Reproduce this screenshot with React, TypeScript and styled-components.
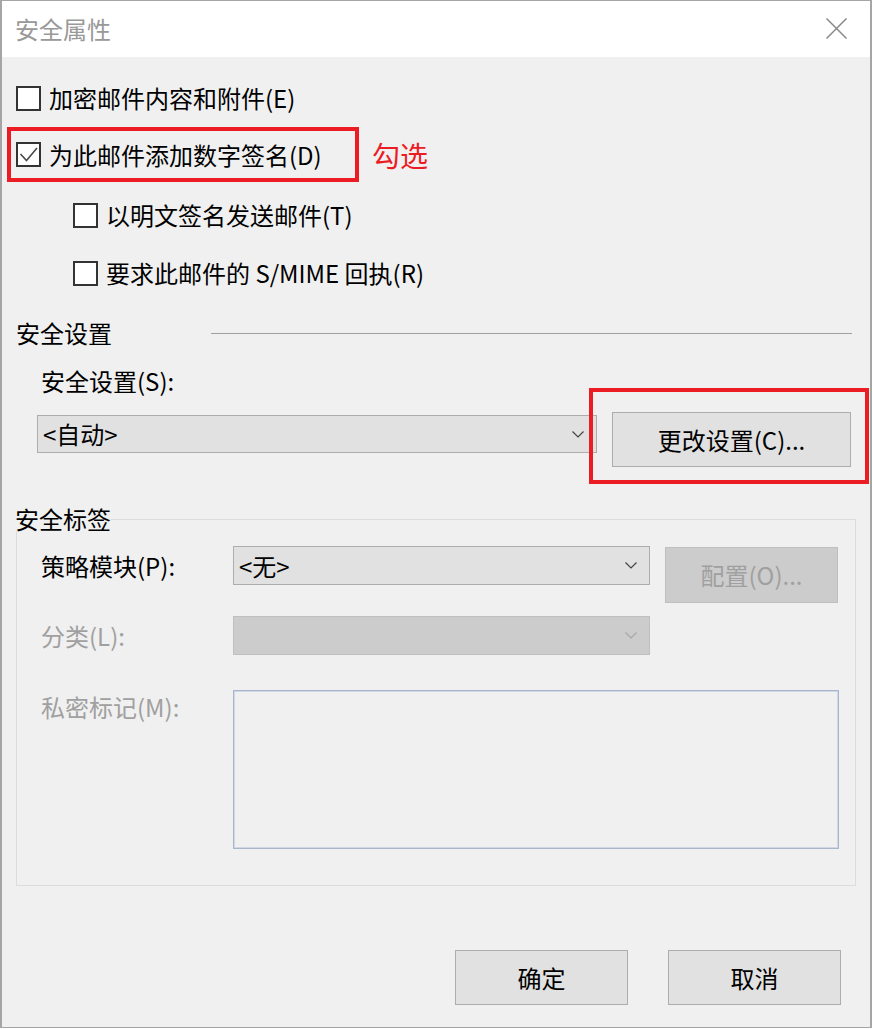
import React from "react";
import styled, { createGlobalStyle } from "styled-components";

const GlobalStyle = createGlobalStyle`
  html, body { margin: 0; padding: 0; background: #ffffff; }
  body { font-family: "Noto Sans CJK SC", "Microsoft YaHei", sans-serif; }
  * { box-sizing: border-box; }
`;

const RED = "#ec1c24";

const Window = styled.div`
  width: 872px;
  height: 1028px;
  border: 1px solid #a5a5a5;
  border-left-width: 2px;
  border-right-width: 2px;
  display: flex;
  flex-direction: column;
  background: #f0f0f0;
  color: #000;
`;

const TitleBar = styled.div`
  height: 56px;
  background: #ffffff;
  display: flex;
  align-items: center;
  justify-content: space-between;
  padding: 0 23px 0 13px;
`;

const Title = styled.div`
  font-size: 24px;
  line-height: 1;
  color: #999999;
`;

const CloseIcon = styled.svg`
  width: 21px;
  height: 21px;
  display: block;
  margin-top: -1px;
`;

const Content = styled.div`
  flex: 1;
  display: flex;
  flex-direction: column;
  padding: 12px 18px 0 14px;
`;

const Text = styled.span<{ $disabled?: boolean }>`
  font-size: 24px;
  line-height: 1;
  white-space: nowrap;
  color: ${(p) => (p.$disabled ? "#a0a0a0" : "#000")};
`;

const CheckRow = styled.div<{ $indent?: number; $top?: number }>`
  display: flex;
  align-items: center;
  gap: 8px;
  height: 58px;
  margin-left: ${(p) => p.$indent ?? 0}px;
  margin-top: ${(p) => p.$top ?? 0}px;
`;

const Box = styled.span`
  width: 25px;
  height: 25px;
  flex: 0 0 25px;
  border: 2px solid #333333;
  background: #ffffff;
  display: flex;
  align-items: center;
  justify-content: center;
`;

const HighlightRow = styled.div`
  display: flex;
  align-items: center;
  margin-left: -9px;
`;

const RedFrame = styled.div`
  display: flex;
  align-items: center;
  gap: 8px;
  width: 352px;
  height: 55px;
  border: 4px solid ${RED};
  padding-left: 5px;
`;

const Annotation = styled.span`
  color: ${RED};
  font-size: 28px;
  line-height: 1;
  margin-left: 13px;
`;

const SectionHeader = styled.div`
  display: grid;
  grid-template-columns: 195px 1fr;
  align-items: center;
  height: 62px;
`;

const Rule = styled.div`
  height: 1px;
  background: #a0a0a0;
`;

const FieldLabel = styled.div`
  margin-left: 25px;
  height: 34px;
  display: flex;
  align-items: center;
`;

const SettingsRow = styled.div`
  display: flex;
  align-items: flex-start;
  margin: 14px 0 0 21px;
`;

const Select = styled.div<{ $width?: number; $height?: number; $disabled?: boolean; $top?: number }>`
  width: ${(p) => (p.$width ? `${p.$width}px` : "100%")};
  height: ${(p) => p.$height ?? 38}px;
  margin-top: ${(p) => p.$top ?? 0}px;
  border: 1px solid ${(p) => (p.$disabled ? "#bfbfbf" : "#adadad")};
  background: ${(p) => (p.$disabled ? "#cccccc" : "#e1e1e1")};
  display: flex;
  align-items: center;
  justify-content: space-between;
  padding: 0 12px 0 5px;
`;

const Chevron = styled.svg`
  width: 12px;
  height: 7px;
  display: block;
`;

const AnnotatedWrap = styled.div`
  position: relative;
  margin-left: 15px;
`;

const Button = styled.div<{ $width: number; $height: number; $disabled?: boolean; $top?: number }>`
  width: ${(p) => p.$width}px;
  height: ${(p) => p.$height}px;
  margin-top: ${(p) => p.$top ?? 0}px;
  border: 1px solid ${(p) => (p.$disabled ? "#bfbfbf" : "#adadad")};
  background: ${(p) => (p.$disabled ? "#cccccc" : "#e1e1e1")};
  display: flex;
  align-items: center;
  justify-content: center;
`;

const RedOverlay = styled.div`
  position: absolute;
  left: -23px;
  top: -24px;
  width: 280px;
  height: 96px;
  border: 4px solid ${RED};
  pointer-events: none;
`;

const Group = styled.fieldset`
  margin: 40px 0 0 0;
  width: 840px;
  min-width: 0;
  padding: 0;
  border: 1px solid #dcdcdc;
`;

const Legend = styled.legend`
  padding: 0;
  margin-left: -2px;
  font-size: 24px;
  line-height: 24px;
  height: 24px;
  color: #000;
`;

const GroupGrid = styled.div`
  display: grid;
  grid-template-columns: 177px 417px 174px;
  column-gap: 15px;
  row-gap: 13px;
  align-items: start;
  padding: 15px 0 36px 24px;
`;

const GridLabel = styled.div<{ $height: number; $top?: number }>`
  height: ${(p) => p.$height}px;
  margin-top: ${(p) => p.$top ?? 0}px;
  display: flex;
  align-items: center;
`;

const TextBox = styled.div`
  grid-column: 2 / span 2;
  margin-top: 22px;
  height: 159px;
  border: 1px solid #a8b5ca;
  box-shadow: inset 0 0 0 1px #cfd8e6;
  background: #f0f0f0;
`;

const ButtonBar = styled.div`
  display: flex;
  justify-content: flex-end;
  gap: 40px;
  margin-top: 64px;
  padding-right: 11px;
`;

const Check = () => (
  <svg width="21" height="21" viewBox="0 0 21 21">
    <polyline points="2.5,10 8.5,16.5 19,4" fill="none" stroke="#4a4a4a" strokeWidth="1.6" />
  </svg>
);

const ChevronDown = ({ color = "#444" }: { color?: string }) => (
  <Chevron viewBox="0 0 12 7">
    <polyline points="0.5,0.5 6,6 11.5,0.5" fill="none" stroke={color} strokeWidth="1.2" />
  </Chevron>
);

export default function App() {
  return (
    <>
      <GlobalStyle />
      <Window>
        <TitleBar>
          <Title>安全属性</Title>
          <CloseIcon viewBox="0 0 21 21">
            <line x1="0.5" y1="0.5" x2="20.5" y2="20.5" stroke="#888" strokeWidth="1.5" />
            <line x1="20.5" y1="0.5" x2="0.5" y2="20.5" stroke="#888" strokeWidth="1.5" />
          </CloseIcon>
        </TitleBar>
        <Content>
          <CheckRow>
            <Box />
            <Text>加密邮件内容和附件(E)</Text>
          </CheckRow>
          <HighlightRow>
            <RedFrame>
              <Box>
                <Check />
              </Box>
              <Text>为此邮件添加数字签名(D)</Text>
            </RedFrame>
            <Annotation>勾选</Annotation>
          </HighlightRow>
          <CheckRow $indent={57} $top={4}>
            <Box />
            <Text>以明文签名发送邮件(T)</Text>
          </CheckRow>
          <CheckRow $indent={57}>
            <Box />
            <Text>要求此邮件的 S/MIME 回执(R)</Text>
          </CheckRow>

          <SectionHeader>
            <Text>安全设置</Text>
            <Rule />
          </SectionHeader>
          <FieldLabel>
            <Text>安全设置(S):</Text>
          </FieldLabel>
          <SettingsRow>
            <Select $width={560} $height={38} $top={3}>
              <Text>&lt;自动&gt;</Text>
              <ChevronDown />
            </Select>
            <AnnotatedWrap>
              <Button $width={239} $height={55}>
                <Text>更改设置(C)...</Text>
              </Button>
              <RedOverlay />
            </AnnotatedWrap>
          </SettingsRow>

          <Group>
            <Legend>安全标签</Legend>
            <GroupGrid>
              <GridLabel $height={39}>
                <Text>策略模块(P):</Text>
              </GridLabel>
              <Select $height={39}>
                <Text>&lt;无&gt;</Text>
                <ChevronDown />
              </Select>
              <Button $width={173} $height={56} $top={1} $disabled>
                <Text $disabled>配置(O)...</Text>
              </Button>

              <GridLabel $height={39}>
                <Text $disabled>分类(L):</Text>
              </GridLabel>
              <Select $height={39} $disabled>
                <span />
                <ChevronDown color="#a8a8a8" />
              </Select>
              <div />

              <GridLabel $height={33} $top={22}>
                <Text $disabled>私密标记(M):</Text>
              </GridLabel>
              <TextBox />
            </GroupGrid>
          </Group>

          <ButtonBar>
            <Button $width={173} $height={55}>
              <Text>确定</Text>
            </Button>
            <Button $width={173} $height={55}>
              <Text>取消</Text>
            </Button>
          </ButtonBar>
        </Content>
      </Window>
    </>
  );
}
